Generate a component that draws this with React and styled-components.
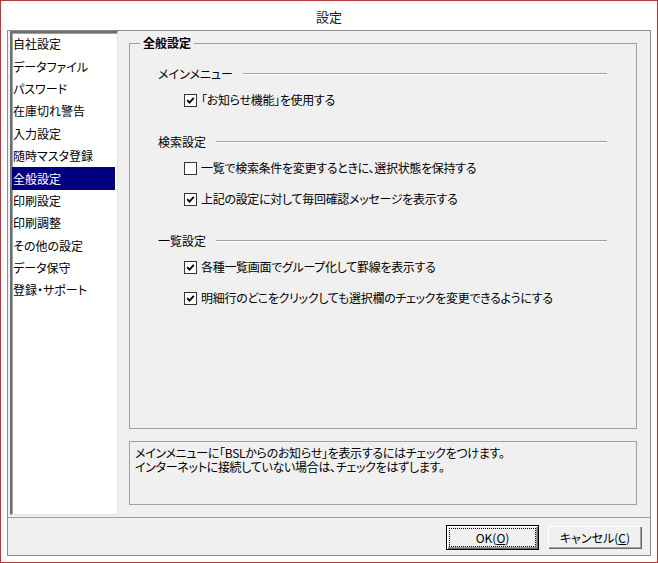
import React from 'react';
import styled, { createGlobalStyle } from 'styled-components';

const GlobalStyle = createGlobalStyle`
  html, body {
    margin: 0;
    padding: 0;
    background: #ffffff;
  }
  * {
    box-sizing: border-box;
  }
`;

const FONT = `"Noto Sans CJK JP", "Noto Sans", sans-serif`;

const Window = styled.div`
  width: 658px;
  height: 563px;
  border: 1px solid #b5383c;
  background: #ffffff;
  display: flex;
  flex-direction: column;
  font-family: ${FONT};
  font-size: 12px;
  font-feature-settings: "palt";
  color: #000;
`;

const TitleBar = styled.div`
  height: 29px;
  display: flex;
  align-items: center;
  justify-content: center;
  padding-top: 1px;
  font-size: 13px;
  color: #1a1a1a;
`;

const Frame = styled.div`
  flex: 1;
  margin: 0 6px 6px 6px;
  border: 1px solid #8c8c8c;
  background: #f0f0f0;
  display: flex;
  flex-direction: column;
`;

const Main = styled.div`
  flex: 1;
  display: flex;
  min-height: 0;
`;

const ListBox = styled.div`
  width: 108px;
  margin: 0 0 2px 2px;
  background: #ffffff;
  border-top: 2px solid #6f6f6f;
  border-left: 2px solid #6f6f6f;
  border-right: 1px solid #e3e3e3;
  border-bottom: 1px solid #e3e3e3;
  box-shadow: inset 1px 1px 0 #a0a0a0;
  padding: 0 2px 0 0;
`;

const ListItem = styled.div`
  height: 22.4px;
  display: flex;
  align-items: center;
  padding: 0 0 1px 1px;
  white-space: nowrap;
  background: ${p => (p.$selected ? '#000080' : 'transparent')};
  color: ${p => (p.$selected ? '#ffffff' : '#000000')};
`;

const RightPane = styled.div`
  flex: 1;
  display: flex;
  flex-direction: column;
  padding: 5px 13px 12px 11px;
`;

const Group = styled.fieldset`
  flex: 1;
  margin: 0;
  padding: 0;
  min-width: 0;
  border: 1px solid #a0a0a0;
`;

const GroupTitle = styled.legend`
  margin-left: 10px;
  padding: 0 3px;
  line-height: 14px;
  font-weight: bold;
`;

const GroupBody = styled.div`
  padding: 17px 29px 0 28px;
  display: flex;
  flex-direction: column;
  gap: 28px;
`;

const Section = styled.div`
  display: flex;
  flex-direction: column;
  gap: 12px;
`;

const SectionHead = styled.div`
  display: flex;
  align-items: center;
  height: 14px;
  line-height: 14px;
`;

const Rule = styled.div`
  flex: 1;
  margin-left: 10px;
  border-top: 1px solid #a0a0a0;
  border-bottom: 1px solid #ffffff;
`;

const Items = styled.div`
  display: flex;
  flex-direction: column;
  gap: 17px;
  padding-left: 26px;
`;

const CheckRow = styled.label`
  display: flex;
  align-items: center;
  height: 14px;
  line-height: 14px;
  gap: 4px;
  white-space: nowrap;
  letter-spacing: -0.3px;
`;

const Box = styled.span`
  width: 13px;
  height: 13px;
  border: 1px solid #333333;
  background: #ffffff;
  display: inline-flex;
  align-items: center;
  justify-content: center;
  flex-shrink: 0;
`;

const Description = styled.div`
  height: 64px;
  margin-top: 12px;
  border: 1px solid #a0a0a0;
  padding: 4px 5px;
  line-height: 14px;
  letter-spacing: -0.3px;
`;

const Footer = styled.div`
  height: 38px;
  border-top: 1px solid #a0a0a0;
  display: flex;
  justify-content: flex-end;
  align-items: flex-start;
  gap: 8px;
  padding: 7px 7px 0 0;
`;

const Button = styled.button`
  width: ${p => p.$w}px;
  height: 25px;
  font-family: ${FONT};
  font-size: 12px;
  font-weight: normal;
  font-feature-settings: "palt";
  color: #000;
  background: #f0f0f0;
  border: 1px solid ${p => (p.$default ? '#000000' : '#f0f0f0')};
  box-shadow: inset 1px 1px 0 #ffffff, inset -1px -1px 0 #696969, inset -2px -2px 0 #a0a0a0;
  padding: 2px;
  display: flex;
  cursor: default;
`;

const Focus = styled.span`
  flex: 1;
  display: flex;
  align-items: center;
  justify-content: center;
  border: 1px dotted ${p => (p.$on ? '#000000' : 'transparent')};
`;

const Key = styled.span`
  text-decoration: underline;
`;

const Check = ({ checked }) => (
  <Box>
    {checked && (
      <svg width="9" height="9" viewBox="0 0 9 9">
        <polyline points="1.2,4.2 3.5,6.6 7.8,1.8" fill="none" stroke="#000" strokeWidth="1.9" />
      </svg>
    )}
  </Box>
);

const menu = [
  '自社設定',
  'データファイル',
  'パスワード',
  '在庫切れ警告',
  '入力設定',
  '随時マスタ登録',
  '全般設定',
  '印刷設定',
  '印刷調整',
  'その他の設定',
  'データ保守',
  '登録・サポート',
];

const sections = [
  {
    title: 'メインメニュー',
    items: [{ text: '「お知らせ機能」を使用する', checked: true }],
  },
  {
    title: '検索設定',
    items: [
      { text: '一覧で検索条件を変更するときに、選択状態を保持する', checked: false },
      { text: '上記の設定に対して毎回確認メッセージを表示する', checked: true },
    ],
  },
  {
    title: '一覧設定',
    items: [
      { text: '各種一覧画面でグループ化して罫線を表示する', checked: true },
      { text: '明細行のどこをクリックしても選択欄のチェックを変更できるようにする', checked: true },
    ],
  },
];

export default function App() {
  return (
    <>
      <GlobalStyle />
      <Window>
        <TitleBar>設定</TitleBar>
        <Frame>
          <Main>
            <ListBox>
              {menu.map(m => (
                <ListItem key={m} $selected={m === '全般設定'}>{m}</ListItem>
              ))}
            </ListBox>
            <RightPane>
              <Group>
                <GroupTitle>全般設定</GroupTitle>
                <GroupBody>
                  {sections.map(s => (
                    <Section key={s.title}>
                      <SectionHead>
                        {s.title}
                        <Rule />
                      </SectionHead>
                      <Items>
                        {s.items.map(it => (
                          <CheckRow key={it.text}>
                            <Check checked={it.checked} />
                            {it.text}
                          </CheckRow>
                        ))}
                      </Items>
                    </Section>
                  ))}
                </GroupBody>
              </Group>
              <Description>
                メインメニューに「BSLからのお知らせ」を表示するにはチェックをつけます。
                <br />
                インターネットに接続していない場合は、チェックをはずします。
              </Description>
            </RightPane>
          </Main>
          <Footer>
            <Button $w={93} $default>
              <Focus $on>OK(<Key>O</Key>)</Focus>
            </Button>
            <Button $w={96}>
              <Focus>キャンセル(<Key>C</Key>)</Focus>
            </Button>
          </Footer>
        </Frame>
      </Window>
    </>
  );
}
